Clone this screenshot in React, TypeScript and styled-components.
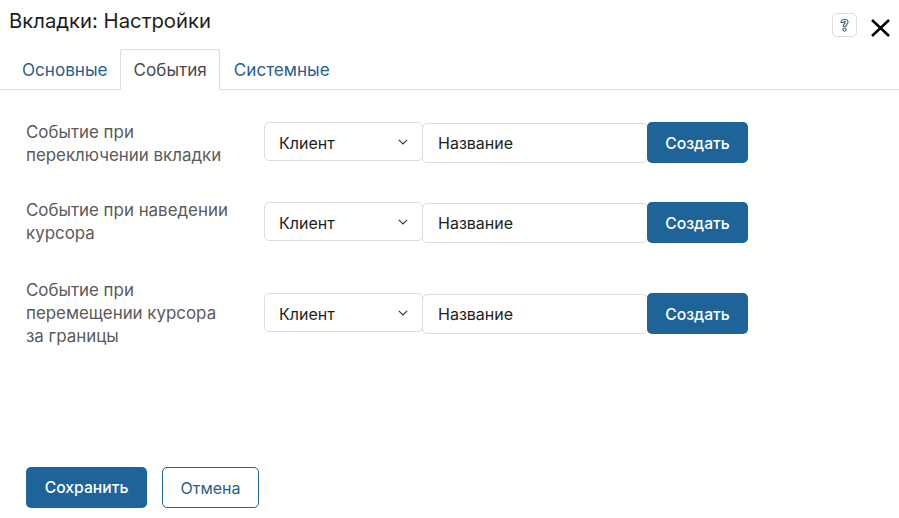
import React from 'react'
import styled, { createGlobalStyle } from 'styled-components'

const Global = createGlobalStyle`
  html, body { margin: 0; padding: 0; background: #fff; }
  body { font-family: Inter, "Noto Sans", sans-serif; color: #1f1f1f; }
`

const Dialog = styled.div`
  width: 899px;
  height: 518px;
  display: flex;
  flex-direction: column;
  overflow: hidden;
`

const Header = styled.div`
  height: 49px;
  padding: 0 9px 7px 9px;
  box-sizing: border-box;
  display: flex;
  align-items: center;
  justify-content: space-between;
`

const Title = styled.div`
  font-size: 20.3px;
  line-height: 24px;
  color: #1e1e1e;
`

const HeaderActions = styled.div`
  display: flex;
  align-items: flex-start;
  gap: 14px;
  padding-top: 8px;
`

const HelpButton = styled.div`
  width: 25px;
  height: 24px;
  box-sizing: border-box;
  border: 1px solid #dcdcdc;
  border-radius: 5px;
  display: flex;
  align-items: center;
  justify-content: center;
`

const CloseButton = styled.div`
  padding-top: 6px;
  display: flex;
`

const Tabs = styled.div`
  height: 41px;
  box-sizing: border-box;
  padding-left: 9px;
  display: flex;
  border-bottom: 1px solid #dcdcdc;
`

const Tab = styled.div<{ $active?: boolean }>`
  height: 41px;
  box-sizing: border-box;
  padding: 0 ${p => (p.$active ? '12px' : '11px')} 0 ${p => (p.$active ? '13px' : '12px')};
  margin-right: ${p => (p.$active ? '1px' : '0')};
  display: flex;
  align-items: center;
  font-size: 17.1px;
  color: ${p => (p.$active ? '#4a4a4a' : '#27608f')};
  background: ${p => (p.$active ? '#fff' : 'transparent')};
  border: 1px solid ${p => (p.$active ? '#dcdcdc' : 'transparent')};
  border-bottom-color: ${p => (p.$active ? '#fff' : 'transparent')};
  border-radius: 3px 3px 0 0;
`

const Body = styled.div`
  flex: 1;
  padding: 31px 26px 0;
  display: flex;
  flex-direction: column;
`

const Row = styled.div<{ $below: number }>`
  display: flex;
  align-items: flex-start;
  margin-bottom: ${p => p.$below}px;
`

const Label = styled.div`
  width: 238px;
  flex: none;
  font-size: 16.9px;
  line-height: 23px;
  color: #5a5a5a;
`

const Controls = styled.div<{ $top: number }>`
  display: flex;
  align-items: flex-start;
  margin-top: ${p => p.$top}px;
`

const Select = styled.div`
  width: 159px;
  height: 39px;
  box-sizing: border-box;
  padding: 0 14px 0 14px;
  margin-right: -1px;
  position: relative;
  z-index: 1;
  border: 1px solid #dcdcdc;
  border-radius: 5px;
  background: #fff;
  display: flex;
  align-items: center;
  justify-content: space-between;
  font-size: 16px;
  color: #1e1e1e;
`

const SelectValue = styled.span`
  padding-top: 3px;
`

const Input = styled.div`
  width: 226px;
  height: 40px;
  margin: 1px -1px 0 0;
  box-sizing: border-box;
  padding: 0 15px;
  border: 1px solid #dcdcdc;
  border-radius: 5px;
  display: flex;
  align-items: center;
  font-size: 16px;
  color: #1e1e1e;
`

const PrimaryButton = styled.div<{ $width: number }>`
  width: ${p => p.$width}px;
  height: 41px;
  box-sizing: border-box;
  position: relative;
  border-radius: 5px;
  background: #1f6499;
  color: #fff;
  display: flex;
  align-items: center;
  justify-content: center;
  font-size: 15.7px;
  font-weight: 500;
`

const CreateButton = styled(PrimaryButton)`
  padding-top: 1px;
`

const Footer = styled.div`
  padding: 0 26px 10px;
  display: flex;
  gap: 15px;
`

const CancelButton = styled.div`
  width: 97px;
  height: 41px;
  box-sizing: border-box;
  border: 1px solid #1f6499;
  border-radius: 5px;
  color: #27608f;
  display: flex;
  align-items: center;
  justify-content: center;
  font-size: 16px;
`

const HelpIcon = () => (
  <svg width="11" height="15" viewBox="0 0 11 15" fill="none" stroke="#4a5a70" strokeWidth="1.1">
    <path d="M2 4.5C2 2.6 3.4 1.5 5.5 1.5S9 2.6 9 4.2C9 6 6.9 6.2 6.9 8.3H4.2C4.2 6.2 6.2 5.8 6.2 4.4 6.2 3.8 5.9 3.6 5.5 3.6 5 3.6 4.7 3.9 4.7 4.5Z" />
    <circle cx="5.5" cy="11.6" r="1.6" />
  </svg>
)

const CloseIcon = () => (
  <svg width="19" height="18" viewBox="0 0 19 18" fill="none" stroke="#000" strokeWidth="2.5">
    <path d="M1 1L18 17M18 1L1 17" />
  </svg>
)

const Chevron = () => (
  <svg width="10" height="6" viewBox="0 0 10 6" fill="none" stroke="#333" strokeWidth="1.1">
    <path d="M.8.8L5 5 9.2.8" />
  </svg>
)

const events = [
  { lines: ['Событие при', 'переключении вкладки'], top: 1, below: 32 },
  { lines: ['Событие при наведении', 'курсора'], top: 3, below: 34 },
  { lines: ['Событие при', 'перемещении курсора', 'за границы'], top: 14, below: 0 },
]

export default function App() {
  return (
    <Dialog>
      <Global />
      <Header>
        <Title>Вкладки: Настройки</Title>
        <HeaderActions>
          <HelpButton><HelpIcon /></HelpButton>
          <CloseButton><CloseIcon /></CloseButton>
        </HeaderActions>
      </Header>
      <Tabs>
        <Tab>Основные</Tab>
        <Tab $active>События</Tab>
        <Tab>Системные</Tab>
      </Tabs>
      <Body>
        {events.map(e => (
          <Row key={e.lines.join()} $below={e.below}>
            <Label>{e.lines.map(l => <div key={l}>{l}</div>)}</Label>
            <Controls $top={e.top}>
              <Select><SelectValue>Клиент</SelectValue><Chevron /></Select>
              <Input>Название</Input>
              <CreateButton $width={101}>Создать</CreateButton>
            </Controls>
          </Row>
        ))}
      </Body>
      <Footer>
        <PrimaryButton $width={121}>Сохранить</PrimaryButton>
        <CancelButton>Отмена</CancelButton>
      </Footer>
    </Dialog>
  )
}
